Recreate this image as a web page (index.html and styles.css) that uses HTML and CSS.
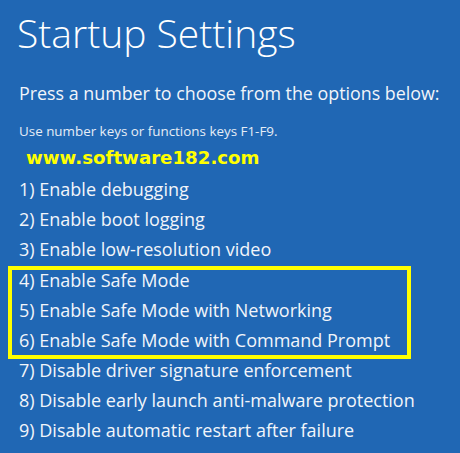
FILE: index.html
```html
<!DOCTYPE html>
<html lang="en">
<head>
  <meta charset="UTF-8">
  <meta name="viewport" content="width=device-width, initial-scale=1.0">
  <title>Startup Settings</title>
  <link rel="stylesheet" href="styles.css">
</head>
<body>
  <div class="screen">
    <h1 class="title">Startup Settings</h1>
    <p class="prompt">Press a number to choose from the options below:</p>
    <p class="hint">Use number keys or functions keys F1-F9.</p>
    <p class="site">www.software182.com</p>

    <ul class="options">
      <li>1) Enable debugging</li>
      <li>2) Enable boot logging</li>
      <li>3) Enable low-resolution video</li>
    </ul>
    <ul class="options marked">
      <li>4) Enable Safe Mode</li>
      <li>5) Enable Safe Mode with Networking</li>
      <li>6) Enable Safe Mode with Command Prompt</li>
    </ul>
    <ul class="options">
      <li>7) Disable driver signature enforcement</li>
      <li>8) Disable early launch anti-malware protection</li>
      <li>9) Disable automatic restart after failure</li>
    </ul>
  </div>
</body>
</html>
```

FILE: styles.css
```css
html, body {
  margin: 0;
  padding: 0;
  background-color: #2067b4;
}
.screen {
  width: 460px;
  height: 453px;
  padding: 0 0 0 19px;
  box-sizing: border-box;
  font-family: "Open Sans", "Noto Sans", sans-serif;
  color: #ffffff;
  overflow: hidden;
}
.title {
  margin: 0 0 0 -2px;
  padding-top: 8px;
  font-size: 39px;
  font-weight: 300;
  line-height: 50px;
}
.prompt {
  margin: 23px 0 0;
  font-size: 17.85px;
  line-height: 24px;
  color: #f2f5fa;
}
.hint {
  margin: 18px 0 0;
  font-size: 13.4px;
  line-height: 16px;
  color: #e6edf6;
}
.site {
  margin: 8px 0 0 7px;
  font-family: "DejaVu Sans", sans-serif;
  font-weight: bold;
  font-size: 18.2px;
  line-height: 22px;
  color: #ffff00;
}
.options {
  list-style: none;
  margin: 0;
  padding: 0;
  font-size: 18px;
  line-height: 30px;
  color: #f2f5fa;
}
.site + .options {
  margin-top: 5px;
}
.marked {
  width: 388px;
  margin: 2px 0 -4px -11px;
  padding-left: 7px;
  border: 4px solid #ffff00;
}
.marked li:first-child {
  margin-top: -5px;
}
```
